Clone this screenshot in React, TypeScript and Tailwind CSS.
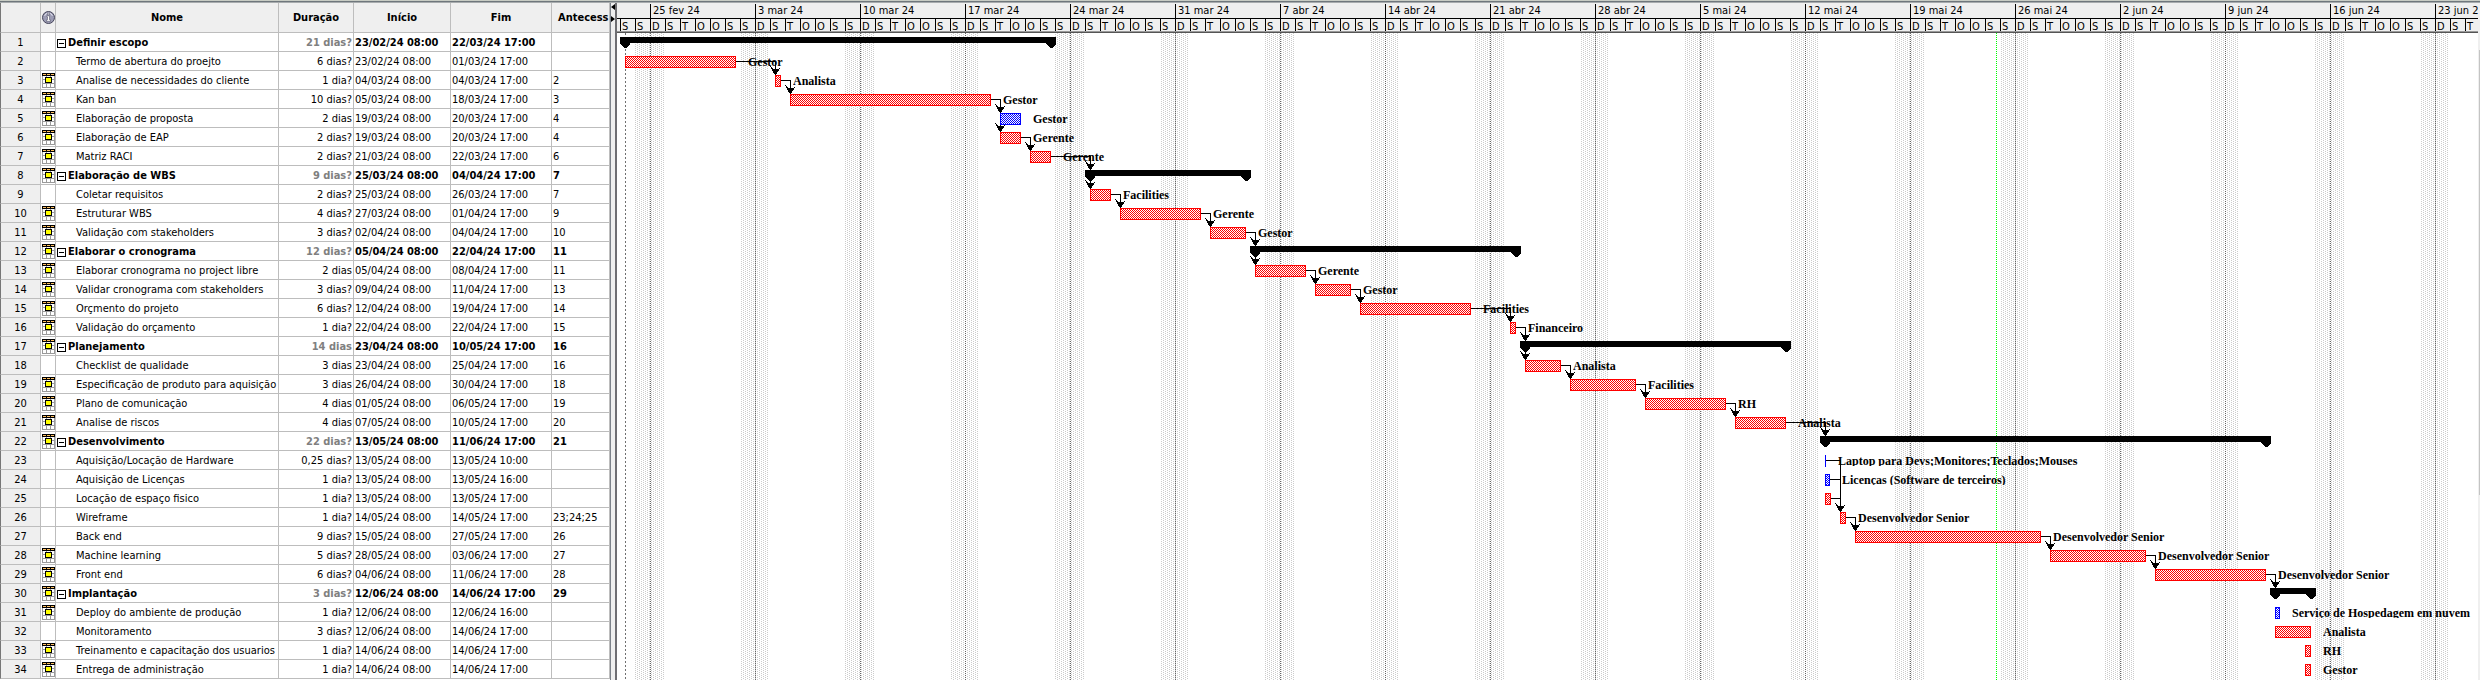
type Task = {
  name: string;
  dur: string;
  start: string;
  end: string;
  pred?: string;
  icon?: boolean;
  group?: boolean;
  blue?: boolean;
  label?: string;
};

const TASKS: Task[] = [
  { name: "Definir escopo", dur: "21 dias?", start: "23/02/24 08:00", end: "22/03/24 17:00", group: true },
  { name: "Termo de abertura do proejto", dur: "6 dias?", start: "23/02/24 08:00", end: "01/03/24 17:00", label: "Gestor" },
  { name: "Analise de necessidades do cliente", dur: "1 dia?", start: "04/03/24 08:00", end: "04/03/24 17:00", pred: "2", icon: true, label: "Analista" },
  { name: "Kan ban", dur: "10 dias?", start: "05/03/24 08:00", end: "18/03/24 17:00", pred: "3", icon: true, label: "Gestor" },
  { name: "Elaboração de proposta", dur: "2 dias", start: "19/03/24 08:00", end: "20/03/24 17:00", pred: "4", icon: true, blue: true, label: "Gestor" },
  { name: "Elaboração de EAP", dur: "2 dias?", start: "19/03/24 08:00", end: "20/03/24 17:00", pred: "4", icon: true, label: "Gerente" },
  { name: "Matriz RACI", dur: "2 dias?", start: "21/03/24 08:00", end: "22/03/24 17:00", pred: "6", icon: true, label: "Gerente" },
  { name: "Elaboração de WBS", dur: "9 dias?", start: "25/03/24 08:00", end: "04/04/24 17:00", pred: "7", icon: true, group: true },
  { name: "Coletar requisitos", dur: "2 dias?", start: "25/03/24 08:00", end: "26/03/24 17:00", pred: "7", label: "Facilities" },
  { name: "Estruturar WBS", dur: "4 dias?", start: "27/03/24 08:00", end: "01/04/24 17:00", pred: "9", icon: true, label: "Gerente" },
  { name: "Validação com stakeholders", dur: "3 dias?", start: "02/04/24 08:00", end: "04/04/24 17:00", pred: "10", icon: true, label: "Gestor" },
  { name: "Elaborar o cronograma", dur: "12 dias?", start: "05/04/24 08:00", end: "22/04/24 17:00", pred: "11", icon: true, group: true },
  { name: "Elaborar cronograma no project libre", dur: "2 dias", start: "05/04/24 08:00", end: "08/04/24 17:00", pred: "11", icon: true, label: "Gerente" },
  { name: "Validar cronograma com stakeholders", dur: "3 dias?", start: "09/04/24 08:00", end: "11/04/24 17:00", pred: "13", icon: true, label: "Gestor" },
  { name: "Orçmento do projeto", dur: "6 dias?", start: "12/04/24 08:00", end: "19/04/24 17:00", pred: "14", icon: true, label: "Facilities" },
  { name: "Validação do orçamento", dur: "1 dia?", start: "22/04/24 08:00", end: "22/04/24 17:00", pred: "15", icon: true, label: "Financeiro" },
  { name: "Planejamento", dur: "14 dias", start: "23/04/24 08:00", end: "10/05/24 17:00", pred: "16", icon: true, group: true },
  { name: "Checklist de qualidade", dur: "3 dias", start: "23/04/24 08:00", end: "25/04/24 17:00", pred: "16", label: "Analista" },
  { name: "Especificação de produto para aquisição", dur: "3 dias", start: "26/04/24 08:00", end: "30/04/24 17:00", pred: "18", icon: true, label: "Facilities" },
  { name: "Plano de comunicação", dur: "4 dias", start: "01/05/24 08:00", end: "06/05/24 17:00", pred: "19", icon: true, label: "RH" },
  { name: "Analise de riscos", dur: "4 dias", start: "07/05/24 08:00", end: "10/05/24 17:00", pred: "20", icon: true, label: "Analista" },
  { name: "Desenvolvimento", dur: "22 dias?", start: "13/05/24 08:00", end: "11/06/24 17:00", pred: "21", icon: true, group: true },
  { name: "Aquisição/Locação de Hardware", dur: "0,25 dias?", start: "13/05/24 08:00", end: "13/05/24 10:00", blue: true, label: "Laptop para Devs;Monitores;Teclados;Mouses" },
  { name: "Aquisição de Licenças", dur: "1 dia?", start: "13/05/24 08:00", end: "13/05/24 16:00", blue: true, label: "Licenças (Software de terceiros)" },
  { name: "Locação de espaço fisico", dur: "1 dia?", start: "13/05/24 08:00", end: "13/05/24 17:00" },
  { name: "Wireframe", dur: "1 dia?", start: "14/05/24 08:00", end: "14/05/24 17:00", pred: "23;24;25", label: "Desenvolvedor Senior" },
  { name: "Back end", dur: "9 dias?", start: "15/05/24 08:00", end: "27/05/24 17:00", pred: "26", label: "Desenvolvedor Senior" },
  { name: "Machine learning", dur: "5 dias?", start: "28/05/24 08:00", end: "03/06/24 17:00", pred: "27", icon: true, label: "Desenvolvedor Senior" },
  { name: "Front end", dur: "6 dias?", start: "04/06/24 08:00", end: "11/06/24 17:00", pred: "28", icon: true, label: "Desenvolvedor Senior" },
  { name: "Implantação", dur: "3 dias?", start: "12/06/24 08:00", end: "14/06/24 17:00", pred: "29", icon: true, group: true },
  { name: "Deploy do ambiente de produção", dur: "1 dia?", start: "12/06/24 08:00", end: "12/06/24 16:00", icon: true, blue: true, label: "Serviço de Hospedagem em nuvem" },
  { name: "Monitoramento", dur: "3 dias?", start: "12/06/24 08:00", end: "14/06/24 17:00", label: "Analista" },
  { name: "Treinamento e capacitação dos usuarios", dur: "1 dia?", start: "14/06/24 08:00", end: "14/06/24 17:00", icon: true, label: "RH" },
  { name: "Entrega de administração", dur: "1 dia?", start: "14/06/24 08:00", end: "14/06/24 17:00", icon: true, label: "Gestor" },
];

const WEEKS = [
  "25 fev 24", "3 mar 24", "10 mar 24", "17 mar 24", "24 mar 24", "31 mar 24",
  "7 abr 24", "14 abr 24", "21 abr 24", "28 abr 24", "5 mai 24", "12 mai 24",
  "19 mai 24", "26 mai 24", "2 jun 24", "9 jun 24", "16 jun 24", "23 jun 24",
];
const DAY_LETTERS = ["S", "S", "D", "S", "T", "O", "O"];
const DAYS = Array.from({ length: 124 }, (_, i) => DAY_LETTERS[i % 7]);

const ROW = 19;
const DAY = 15;
const ORIGIN = 3;
const HEIGHT = TASKS.length * ROW + 1;

function xOf(stamp: string) {
  const [d, m, y, h] = stamp.split(/[/ :]/).map(Number);
  const days = (Date.UTC(2000 + y, m - 1, d) - Date.UTC(2024, 1, 23)) / 86400000;
  return ORIGIN + Math.round(days * DAY + (h * DAY) / 24);
}

function CalendarIcon() {
  return (
    <svg width="13" height="15" viewBox="0 0 13 15" shapeRendering="crispEdges" className="mx-auto block" aria-hidden="true">
      <path d="M0 3h13v12H0z" fill="#fff" />
      <path d="M0 3h1v12H0zM4 3h1v12H4zM8 3h1v12H8zM12 3h1v12h-1zM0 6h13v1H0zM0 10h13v1H0zM0 14h13v1H0z" fill="#9a9a9a" />
      <path d="M0 0h13v3H0z" fill="#000" />
      <path d="M1 1h3v1H1zM5 1h3v1H5zM9 1h3v1H9z" fill="#ffc060" />
      <path d="M3 4h7v6H3z" fill="#000" />
      <path d="M4 5h5v4H4z" fill="#ff0" />
    </svg>
  );
}

function InfoIcon() {
  return (
    <svg width="13" height="13" viewBox="0 0 13 13" className="mx-auto block" aria-label="Indicadores">
      <circle cx="6.5" cy="6.5" r="6" fill="#9c9cb4" stroke="#45455a" strokeWidth="1" />
      <path d="M2.5 5a4.2 4.2 0 0 1 8 0" fill="none" stroke="#dcdcea" strokeWidth="1" />
      <path d="M5.5 2.2h2v1.6h-2zM5 4.8h2.500v4h1V10.300h-4V8.800h1V6H5z" fill="#fff" stroke="#45455a" strokeWidth=".5" />
    </svg>
  );
}

function TaskTable() {
  const head = "h-[30px] overflow-hidden border-r border-b border-[#bdbdbd] bg-[#efefef] p-0 text-center font-bold whitespace-nowrap";
  const cell = "h-[19px] overflow-hidden border-r border-b border-[#bdbdbd] pt-0.5 pr-0 pb-0 pl-px text-left whitespace-nowrap";
  return (
    <table className="w-[610px] shrink-0 table-fixed border-separate border-spacing-0 self-start">
      <colgroup>
        <col className="w-[41px]" />
        <col className="w-[15px]" />
        <col className="w-[223px]" />
        <col className="w-[75px]" />
        <col className="w-[97px]" />
        <col className="w-[101px]" />
        <col className="w-[58px]" />
      </colgroup>
      <thead>
        <tr>
          <th className={head + " border-l border-l-[#777]"} />
          <th className={head}><InfoIcon /></th>
          <th className={head}>Nome</th>
          <th className={head}>Duração</th>
          <th className={head}>Início</th>
          <th className={head}>Fim</th>
          <th className={head}><div className="overflow-hidden pl-1.5 text-left">Antecess</div></th>
        </tr>
      </thead>
      <tbody>
        {TASKS.map((t, i) => (
          <tr key={i} className={t.group ? "font-bold" : ""}>
            <td className="h-[19px] border-r border-b border-l border-[#bdbdbd] border-l-[#777] bg-[#efefef] px-0 pt-0.5 pb-0 text-center font-normal">{i + 1}</td>
            <td className="h-[19px] border-r border-b border-[#bdbdbd] px-0 pt-px pb-0">{t.icon && <CalendarIcon />}</td>
            <td className={cell}>
              {t.group ? (
                <div className="flex items-center gap-0.5">
                  <button type="button" aria-label={"Recolher " + t.name} className="flex size-[9px] items-center justify-center border border-black bg-white">
                    <span className="h-px w-[5px] bg-black" />
                  </button>
                  {t.name}
                </div>
              ) : (
                <div className="pl-[19px]">{t.name}</div>
              )}
            </td>
            <td className={"h-[19px] border-r border-b border-[#bdbdbd] pt-0.5 pr-px pb-0 pl-0 text-right whitespace-nowrap " + (t.group ? "text-[#808080]" : "")}>{t.dur}</td>
            <td className={cell}>{t.start}</td>
            <td className={cell}>{t.end}</td>
            <td className={cell}>{t.pred}</td>
          </tr>
        ))}
      </tbody>
    </table>
  );
}

function Splitter() {
  return (
    <div className="w-[7px] shrink-0 border-r-2 border-l border-r-[#6e6e72] border-l-[#7c828a] bg-[#efefef]">
      <svg width="4" height="20" viewBox="0 0 4 20" className="block" aria-hidden="true">
        <path d="M4 1v6L0 4zM0 13v6l4-3z" fill="#000" />
      </svg>
    </div>
  );
}

function TimeScale() {
  return (
    <div className="border-b border-[#555] bg-[#efefef]">
      <div className="flex h-[16px] items-end overflow-hidden border-b border-black">
        <div className="w-[33px] shrink-0" />
        {WEEKS.map((w) => (
          <div key={w} className="h-[14px] w-[105px] shrink-0 border-l border-black pl-0.5 leading-[14px] whitespace-nowrap last:w-auto last:shrink">{w}</div>
        ))}
      </div>
      <div className="flex h-[13px] overflow-hidden border-b border-[#999]">
        <div className="w-[3px] shrink-0" />
        {DAYS.map((d, i) => (
          <div key={i} className="w-[15px] shrink-0 border-l border-black pl-px leading-[16px]">{d}</div>
        ))}
      </div>
    </div>
  );
}

function Links() {
  return (
    <>
      {TASKS.flatMap((t, i) =>
        (t.pred ? t.pred.split(";") : []).map((p) => {
          const from = Number(p) - 1;
          const x0 = xOf(TASKS[from].end);
          const x = xOf(t.start);
          const y0 = from * ROW + 9;
          const y = i * ROW + 4;
          return (
            <g key={i + "-" + p}>
              <path d={`M${x0} ${y0 + 0.5}H${x + 0.5}V${y}`} fill="none" stroke="#000" />
              <path d={`M${x - 5} ${y - 9}l3 3h5l3 -3l-2 4l-3 5h-1l-3 -5z`} fill="#000" />
            </g>
          );
        }),
      )}
    </>
  );
}

function Bar({ task, index }: { task: Task; index: number }) {
  const x = xOf(task.start);
  const end = xOf(task.end);
  const y = index * ROW + 4;
  if (task.group) {
    const foot = (c: number) => `M${c - 5} ${y}h10v7l-4 4h-2l-4 -4z`;
    return <path d={`M${x - 5} ${y}H${end + 5}v6H${x - 5}z${foot(x)}${foot(end)}`} fill="#000" />;
  }
  return (
    <>
      <rect
        x={x + 0.5}
        y={y + 0.5}
        width={Math.max(end - x - 1, 0.01)}
        height={11}
        fill={task.blue ? "url(#blueDots)" : "url(#redDots)"}
        stroke={task.blue ? "#00f" : "#f00"}
      />
      {task.label && (
        <svg x={end + 12} y={index * ROW} width="300" height="15" overflow="hidden">
          <text x="0" y="14" className="font-['Liberation_Serif',serif] text-[12px] font-bold">{task.label}</text>
        </svg>
      )}
    </>
  );
}

function Chart() {
  return (
    <svg width="100%" height={HEIGHT} className="block bg-white" shapeRendering="crispEdges" role="img" aria-label="Gráfico de Gantt">
      <defs>
        <pattern id="redDots" width="2" height="2" patternUnits="userSpaceOnUse">
          <path d="M0 0h2v2H0z" fill="#fff" />
          <path d="M0 0h1v1H0zM1 1h1v1H1z" fill="#f00" />
        </pattern>
        <pattern id="blueDots" width="2" height="2" patternUnits="userSpaceOnUse">
          <path d="M0 0h2v2H0z" fill="#fff" />
          <path d="M0 0h1v1H0zM1 1h1v1H1z" fill="#00f" />
        </pattern>
        <pattern id="weekend" width="4" height="2" patternUnits="userSpaceOnUse">
          <path d="M0 0h1v1H0zM2 1h1v1H2z" fill="#cccccc" />
        </pattern>
      </defs>
      {WEEKS.map((w, i) => {
        const x = ORIGIN + 30 + i * 105;
        return (
          <g key={w}>
            <rect x={x - 15} y="0" width="29" height={HEIGHT} fill="url(#weekend)" />
            <path d={`M${x + 0.5} 0V${HEIGHT}`} stroke="#666" strokeDasharray="1 1" />
          </g>
        );
      })}
      <path d={`M${ORIGIN + 5.5} 0V${HEIGHT}`} stroke="#707070" strokeDasharray="2 2" />
      <path d={`M1379.5 0V${HEIGHT}`} stroke="#0f0" strokeDasharray="1 1" />
      <Links />
      {TASKS.map((t, i) => (
        <Bar key={i} task={t} index={i} />
      ))}
    </svg>
  );
}

export default function App() {
  return (
    <div className="min-h-screen overflow-hidden bg-white font-['DejaVu_Sans_Condensed','DejaVu_Sans',sans-serif] text-[11px] leading-[16px] text-black">
      <div className="h-[3px] border-t border-b border-t-[#c8ccc4] border-b-[#a8acae] bg-[#6f777c]" />
      <div className="flex">
        <TaskTable />
        <Splitter />
        <div className="min-w-0 flex-1 overflow-hidden">
          <TimeScale />
          <Chart />
        </div>
        <div className="w-[2px] shrink-0 bg-[#efefef] pt-[47px]">
          <div className="ml-px h-[445px] bg-[#c4c4c4]" />
        </div>
      </div>
    </div>
  );
}
